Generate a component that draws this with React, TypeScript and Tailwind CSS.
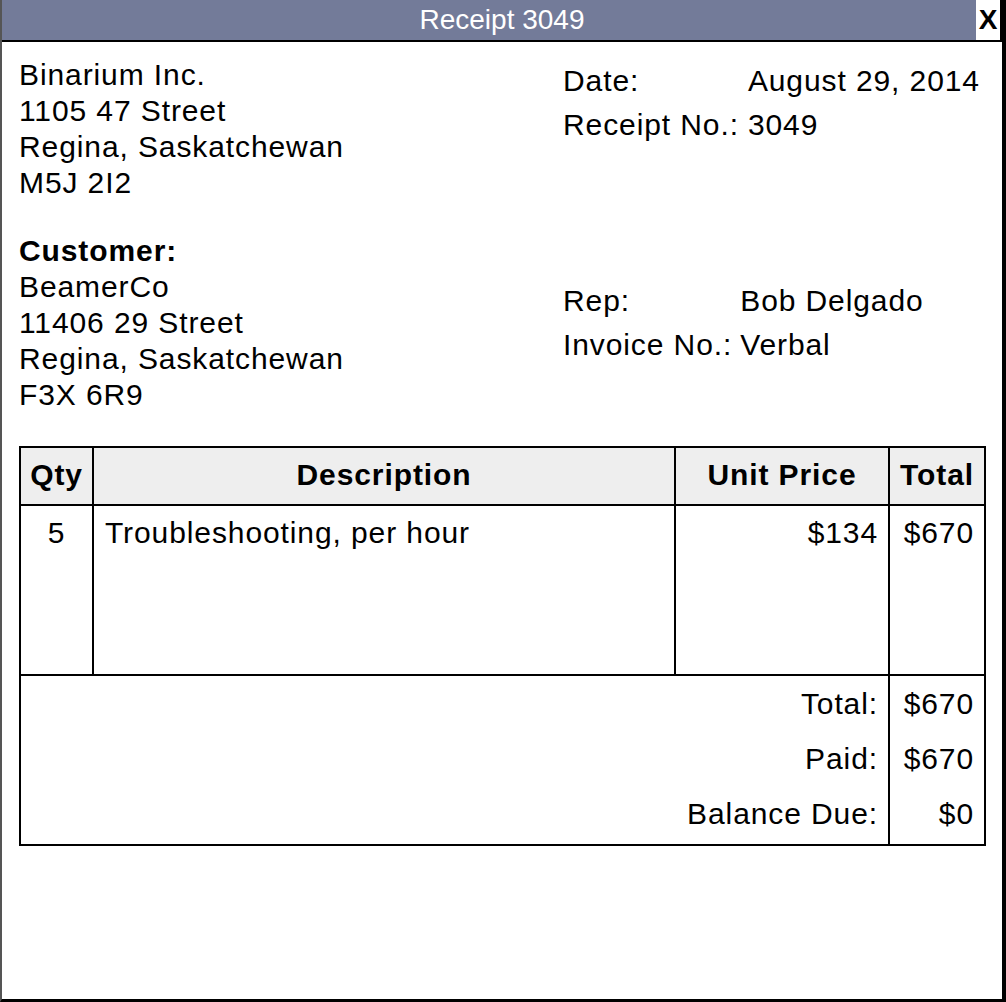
import React from "react";

export default function App() {
  return (
    <div className="w-[1006px] h-[1002px] flex flex-col bg-white border-l-2 border-l-[#555555] border-r-4 border-r-black border-b-[3px] border-b-black font-['Liberation_Sans',Arial,sans-serif] text-black overflow-hidden">
      {/* Title bar */}
      <div className="flex h-[42px] shrink-0 border-b-2 border-black bg-[#737b99]">
        <div className="flex-1 pl-[26px] text-center text-white text-[28px] leading-[40px]">
          Receipt 3049
        </div>
        <button className="w-[26px] h-[40px] bg-white border-r-2 border-black text-center font-bold text-[28px] leading-[40px] text-black">
          X
        </button>
      </div>

      {/* Body */}
      <div className="pl-[17px] pr-[16px] pt-[15px] text-[30px] tracking-[0.9px]">
        {/* Company + receipt info */}
        <div className="flex">
          <div className="w-[544px] leading-[36px]">
            <div>Binarium Inc.</div>
            <div>1105 47 Street</div>
            <div>Regina, Saskatchewan</div>
            <div>M5J 2I2</div>
          </div>
          <div className="mt-[2px] grid grid-cols-[auto_auto] gap-x-[7px] leading-[44px] self-start">
            <div>Date:</div>
            <div className="pl-[2px]">August 29, 2014</div>
            <div>Receipt No.:</div>
            <div className="pl-[2px]">3049</div>
          </div>
        </div>

        {/* Customer + rep */}
        <div className="mt-[32px] flex">
          <div className="w-[544px] leading-[36px]">
            <div className="font-bold">Customer:</div>
            <div>BeamerCo</div>
            <div>11406 29 Street</div>
            <div>Regina, Saskatchewan</div>
            <div>F3X 6R9</div>
          </div>
          <div className="self-center grid grid-cols-[auto_auto] gap-x-[8px] leading-[44px]">
            <div>Rep:</div>
            <div>Bob Delgado</div>
            <div>Invoice No.:</div>
            <div>Verbal</div>
          </div>
        </div>

        {/* Items table */}
        <table className="mt-[33px] w-[967px] table-fixed border-collapse border-2 border-black">
          <colgroup>
            <col className="w-[73px]" />
            <col className="w-[582px]" />
            <col className="w-[214px]" />
            <col />
          </colgroup>
          <thead>
            <tr className="h-[58px] bg-[#eeeeee] font-bold">
              <th className="border-2 border-black text-center pb-[3px]">Qty</th>
              <th className="border-2 border-black text-center pb-[3px]">Description</th>
              <th className="border-2 border-black text-center pb-[3px]">Unit Price</th>
              <th className="border-2 border-black text-center pb-[3px]">Total</th>
            </tr>
          </thead>
          <tbody>
            <tr className="h-[170px] leading-[36px]">
              <td className="border-2 border-black align-top pt-[9px] text-center">5</td>
              <td className="border-2 border-black align-top pt-[9px] pl-[11px]">
                Troubleshooting, per hour
              </td>
              <td className="border-2 border-black align-top pt-[9px] pr-[10px] text-right">$134</td>
              <td className="border-2 border-black align-top pt-[9px] pr-[10px] text-right">$670</td>
            </tr>
            <tr className="h-[56px] border-t-2 border-black">
              <td colSpan={3} className="pr-[10px] text-right">Total:</td>
              <td className="border-l-2 border-black pr-[10px] text-right">$670</td>
            </tr>
            <tr className="h-[56px]">
              <td colSpan={3} className="pr-[10px] pb-[2px] text-right">Paid:</td>
              <td className="border-l-2 border-black pr-[10px] pb-[2px] text-right">$670</td>
            </tr>
            <tr className="h-[58px]">
              <td colSpan={3} className="pr-[10px] pb-[4px] text-right">Balance Due:</td>
              <td className="border-l-2 border-black pr-[10px] pb-[4px] text-right">$0</td>
            </tr>
          </tbody>
        </table>
      </div>
    </div>
  );
}
